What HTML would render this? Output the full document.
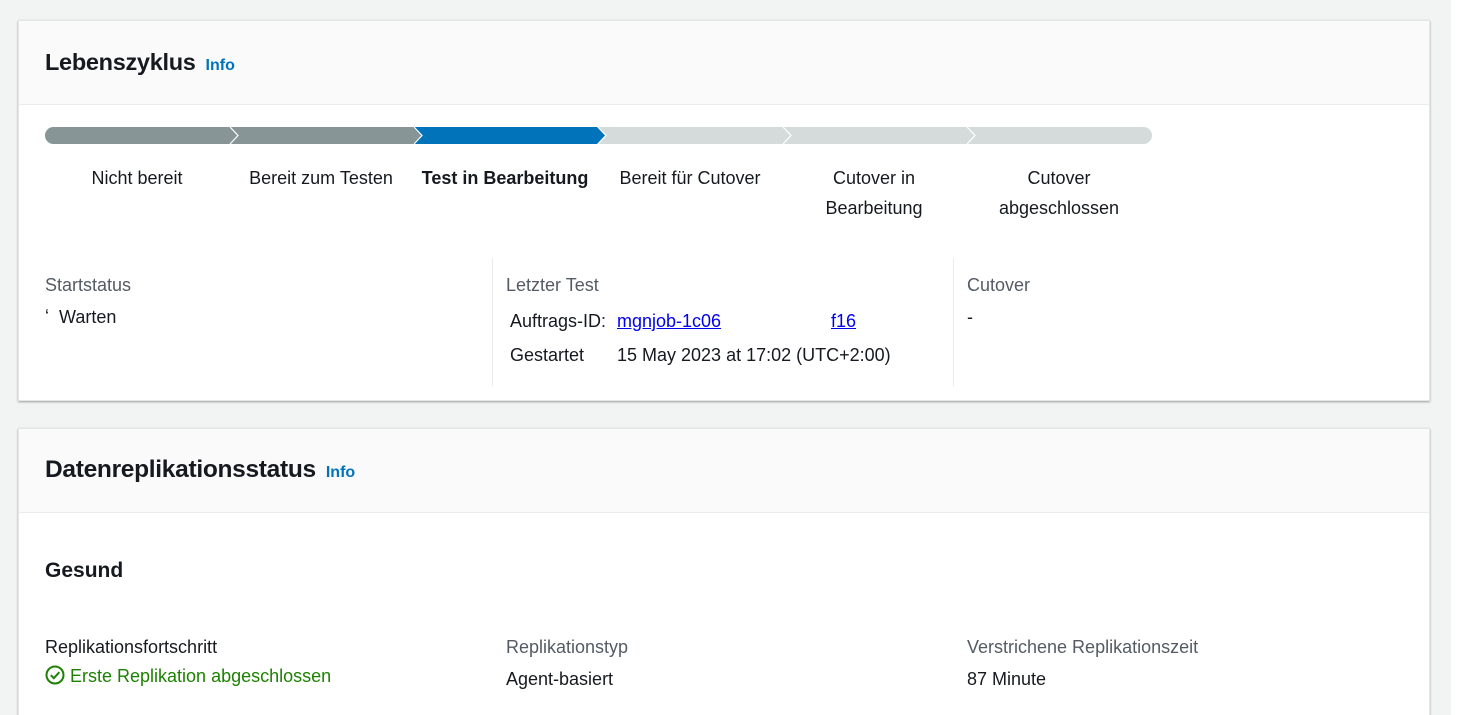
<!DOCTYPE html>
<html><head><style>
html,body{margin:0;width:1457px;height:715px;overflow:hidden}
body{background:#fff;font-family:"Liberation Sans",sans-serif;color:#16191f;position:relative}
.bg{position:absolute;left:0;top:0;width:1451px;height:715px;background:#f2f3f3}
.panel{position:absolute;left:18px;width:1410px;background:#fff;box-shadow:0 1px 2px rgba(0,0,0,.35);border:1px solid #e4e6e6}
.hdr{background:#fafafa;border-bottom:1px solid #e9ebed;position:relative}
.hdr h2{position:absolute;left:26px;margin:0;font-size:23.5px;font-weight:bold;letter-spacing:-0.3px}
.info{color:#0073bb;font-size:16px;font-weight:bold;margin-left:10px;letter-spacing:0}
.t{position:absolute;font-size:18px}
.lbl{color:#545b64}
.step{position:absolute;top:142px;width:184px;text-align:center;font-size:18px;line-height:30px}
a{color:#0000ee;text-decoration:underline}
.vl{position:absolute;width:1px;background:#e9ebed}
</style></head><body>
<div class="bg"></div>
<div class="panel" style="top:20px;height:379px">
 <div class="hdr" style="height:83px"><h2 style="top:28px">Lebenszyklus<span class="info">Info</span></h2></div>
 <svg style="position:absolute;left:26px;top:105px" width="1110" height="20">
  <rect x="0" y="1" width="1107" height="17" rx="8.5" fill="#d5dbdb"/>
  <path d="M8.5 1H368l8 8.5-8 8.5H8.5a8.5 8.5 0 0 1 0-17z" fill="#879596"/>
  <path d="M368 1H552l8 8.5-8 8.5H368l8-8.5z" fill="#0073bb"/>
  <g fill="none" stroke="#fff" stroke-width="1.2">
   <path d="M185 1l8 8.5-8 8.5"/><path d="M369 1l8 8.5-8 8.5"/><path d="M553 1l8 8.5-8 8.5"/><path d="M738 1l8 8.5-8 8.5"/><path d="M922 1l8 8.5-8 8.5"/>
  </g>
 </svg>
 <div class="step" style="left:26px">Nicht bereit</div>
 <div class="step" style="left:210px">Bereit zum Testen</div>
 <div class="step" style="left:394px;font-weight:bold">Test in Bearbeitung</div>
 <div class="step" style="left:579px">Bereit für Cutover</div>
 <div class="step" style="left:763px">Cutover in<br>Bearbeitung</div>
 <div class="step" style="left:948px">Cutover<br>abgeschlossen</div>
 <div class="vl" style="left:473px;top:237px;height:128px"></div>
 <div class="vl" style="left:934px;top:237px;height:128px"></div>
 <div class="t lbl" style="left:26px;top:254px">Startstatus</div>
 <div class="t" style="left:26px;top:286px">ʻ&nbsp; Warten</div>
 <div class="t lbl" style="left:487px;top:254px">Letzter Test</div>
 <div class="t" style="left:491px;top:290px">Auftrags-ID:</div>
 <div class="t" style="left:598px;top:290px;width:108px;overflow:hidden;white-space:nowrap"><a>mgnjob-1c06</a></div>
 <div class="t" style="left:812px;top:290px"><a>f16</a></div>
 <div class="t" style="left:491px;top:324px">Gestartet</div>
 <div class="t" style="left:598px;top:324px">15 May 2023 at 17:02 (UTC+2:00)</div>
 <div class="t lbl" style="left:948px;top:254px">Cutover</div>
 <div class="t" style="left:948px;top:286px">-</div>
</div>
<div class="panel" style="top:428px;height:300px">
 <div class="hdr" style="height:83px"><h2 style="top:27px;font-size:24.5px">Datenreplikationsstatus<span class="info">Info</span></h2></div>
 <div class="t" style="left:26px;top:130px;font-size:21px;font-weight:bold">Gesund</div>
 <div class="t" style="left:26px;top:208px">Replikationsfortschritt</div>
 <div class="t" style="left:26px;top:236px;color:#1d8102"><svg width="20" height="20" viewBox="0 0 20 20" style="vertical-align:-3px;margin-right:5px"><circle cx="10" cy="10" r="8.5" fill="none" stroke="#1d8102" stroke-width="2"/><path d="M5.8 10.2l3 3 5.5-6" fill="none" stroke="#1d8102" stroke-width="2"/></svg>Erste Replikation abgeschlossen</div>
 <div class="t lbl" style="left:487px;top:208px">Replikationstyp</div>
 <div class="t" style="left:487px;top:240px">Agent-basiert</div>
 <div class="t lbl" style="left:948px;top:208px">Verstrichene Replikationszeit</div>
 <div class="t" style="left:948px;top:240px">87 Minute</div>
</div>
</body></html>
